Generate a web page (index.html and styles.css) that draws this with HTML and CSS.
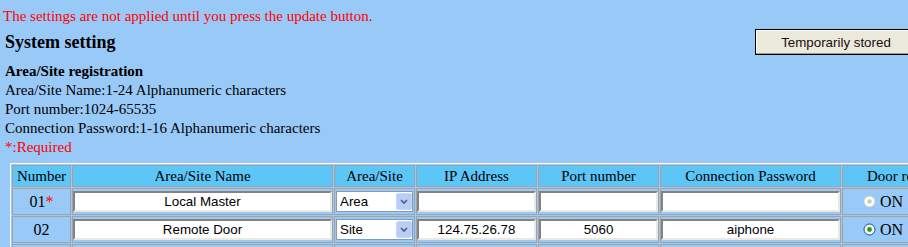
FILE: index.html
```html
<!DOCTYPE html>
<html lang="en">

<head>
    <meta charset="UTF-8">
    <meta name="viewport" content="width=device-width, initial-scale=1.0">
    <title>System setting</title>
    <link rel="stylesheet" href="styles.css">
</head>

<body>
    <div class="page">
        <p class="notice">The settings are not applied until you press the update button.</p>
        <div class="title-row">
            <h1>System setting</h1>
            <button class="store-button" type="button">Temporarily stored</button>
        </div>
        <div class="info">
            <h2>Area/Site registration</h2>
            <div>Area/Site Name:1-24 Alphanumeric characters</div>
            <div>Port number:1024-65535</div>
            <div>Connection Password:1-16 Alphanumeric characters</div>
            <div class="required">*:Required</div>
        </div>
        <table class="site-table">
            <thead>
                <tr>
                    <th class="col-num">Number</th>
                    <th class="col-name">Area/Site Name</th>
                    <th class="col-type">Area/Site</th>
                    <th class="col-ip">IP Address</th>
                    <th class="col-port">Port number</th>
                    <th class="col-pass">Connection Password</th>
                    <th class="col-door">Door release</th>
                </tr>
            </thead>
            <tbody>
                <tr>
                    <td class="num">01<span class="star">*</span></td>
                    <td><input type="text" class="field" value="Local Master"></td>
                    <td>
                        <span class="select">
                            <select>
                                <option selected>Area</option>
                                <option>Site</option>
                            </select>
                            <svg class="arrow" width="16" height="17" viewBox="0 0 16 17">
                                <rect x="0.5" y="0.5" width="15" height="16" rx="1.5" fill="#b9cdf7" stroke="#c6d6fb" />
                                <path d="M5 7l3 3 3-3" fill="none" stroke="#4d6185" stroke-width="1.6" />
                            </svg>
                        </span>
                    </td>
                    <td><input type="text" class="field" value=""></td>
                    <td><input type="text" class="field" value=""></td>
                    <td><input type="text" class="field" value=""></td>
                    <td class="door">
                        <span class="radio">
                            <svg width="13" height="13" viewBox="0 0 13 13">
                                <circle cx="6.5" cy="6.5" r="5.5" fill="#fff" stroke="#cac8bb" />
                                <circle cx="6.5" cy="6.5" r="2.2" fill="#cac8bb" />
                            </svg>ON
                        </span>
                        <span class="radio">
                            <svg width="13" height="13" viewBox="0 0 13 13">
                                <circle cx="6.5" cy="6.5" r="5.5" fill="#fff" stroke="#cac8bb" />
                            </svg>OFF
                        </span>
                    </td>
                </tr>
                <tr>
                    <td class="num">02</td>
                    <td><input type="text" class="field" value="Remote Door"></td>
                    <td>
                        <span class="select">
                            <select>
                                <option>Area</option>
                                <option selected>Site</option>
                            </select>
                            <svg class="arrow" width="16" height="17" viewBox="0 0 16 17">
                                <rect x="0.5" y="0.5" width="15" height="16" rx="1.5" fill="#b9cdf7" stroke="#c6d6fb" />
                                <path d="M5 7l3 3 3-3" fill="none" stroke="#4d6185" stroke-width="1.6" />
                            </svg>
                        </span>
                    </td>
                    <td><input type="text" class="field" value="124.75.26.78"></td>
                    <td><input type="text" class="field" value="5060"></td>
                    <td><input type="text" class="field" value="aiphone"></td>
                    <td class="door">
                        <span class="radio">
                            <svg width="13" height="13" viewBox="0 0 13 13">
                                <circle cx="6.5" cy="6.5" r="5.5" fill="#f4f4f0" stroke="#1c5180" />
                                <circle cx="6.5" cy="6.5" r="2.4" fill="#21a121" />
                            </svg>ON
                        </span>
                        <span class="radio">
                            <svg width="13" height="13" viewBox="0 0 13 13">
                                <circle cx="6.5" cy="6.5" r="5.5" fill="#f4f4f0" stroke="#1c5180" />
                            </svg>OFF
                        </span>
                    </td>
                </tr>
                <tr>
                    <td class="num">03</td>
                    <td><input type="text" class="field" value=""></td>
                    <td>
                        <span class="select">
                            <select>
                                <option>Area</option>
                                <option selected>Site</option>
                            </select>
                        </span>
                    </td>
                    <td><input type="text" class="field" value=""></td>
                    <td><input type="text" class="field" value=""></td>
                    <td><input type="text" class="field" value=""></td>
                    <td class="door"></td>
                </tr>
            </tbody>
        </table>
    </div>
</body>

</html>
```

FILE: styles.css
```css
body {
    margin: 0;
    overflow: hidden;
    background-color: #99c9f7;
    color: black;
    font-family: "Liberation Serif", "Times New Roman", serif;
    font-size: 15px;
    line-height: 19px;
}

.page {
    width: 1000px;
    padding: 7px 0 0 3px;
}

.notice {
    margin: 0;
    color: #ff0000;
}

.title-row {
    width: 914px;
    margin-top: 3px;
    display: flex;
    align-items: center;
    justify-content: space-between;
}

.title-row h1 {
    margin: 0 0 0 2px;
    font-size: 18px;
    line-height: 22px;
}

.store-button {
    width: 162px;
    height: 26px;
    padding: 0;
    border: 1px solid black;
    background-color: #ebe9d9;
    box-shadow: inset -1px -1px #9d9b8c, inset 1px 1px #fff;
    font-family: "Liberation Sans", Arial, sans-serif;
    font-size: 13.33px;
    color: #1c0b16;
}

.info {
    margin-top: 7px;
    padding-left: 2px;
}

.info h2 {
    margin: 0;
    font-size: 15px;
    line-height: 19px;
}

.required {
    color: #ff0000;
}

.site-table {
    margin: 6px 0 0 7px;
    width: 960px;
    table-layout: fixed;
    border-collapse: separate;
    border-spacing: 1px;
    border: 1px solid;
    border-color: white #a0a0a0 #a0a0a0 white;
}

.site-table th,
.site-table td {
    box-sizing: border-box;
    border: 1px solid #a3a3a3;
    text-align: center;
    font-weight: normal;
}

.site-table th {
    padding: 1px 2px;
    line-height: 18px;
    background-color: #5ec5f7;
    white-space: nowrap;
    overflow: hidden;
}

.site-table td {
    padding: 2px 0;
    vertical-align: middle;
}

.site-table td.num {
    font-size: 16px;
}

.col-num {
    width: 59px;
}

.col-name {
    width: 261px;
}

.col-type {
    width: 81px;
}

.col-ip,
.col-port {
    width: 121px;
}

.col-pass {
    width: 181px;
}

.col-door {
    width: 126px;
}

.star {
    color: #ff0000;
}

.field {
    display: block;
    box-sizing: border-box;
    width: 100%;
    height: 21px;
    margin: 0;
    padding: 0 2px;
    border: 2px solid;
    border-color: #848284 #ebe8e0 #ebe8e0 #848284;
    background-color: white;
    text-align: center;
    font-family: "Liberation Sans", Arial, sans-serif;
    font-size: 13.33px;
    color: black;
}

.select {
    position: relative;
    display: block;
    margin: 0 1px 0 1px;
}

.select select {
    display: block;
    box-sizing: border-box;
    width: 100%;
    height: 21px;
    margin: 0;
    padding: 0 0 0 3px;
    appearance: none;
    border: 1px solid #7f9db9;
    border-radius: 0;
    background-color: white;
    font-family: "Liberation Sans", Arial, sans-serif;
    font-size: 13.33px;
    color: black;
}

.arrow {
    position: absolute;
    top: 2px;
    right: 1px;
    pointer-events: none;
}

.site-table td.door {
    padding-left: 20px;
    text-align: left;
    white-space: nowrap;
    font-size: 16px;
}

.radio {
    display: inline-flex;
    align-items: center;
    gap: 4px;
    margin-right: 8px;
}
```
